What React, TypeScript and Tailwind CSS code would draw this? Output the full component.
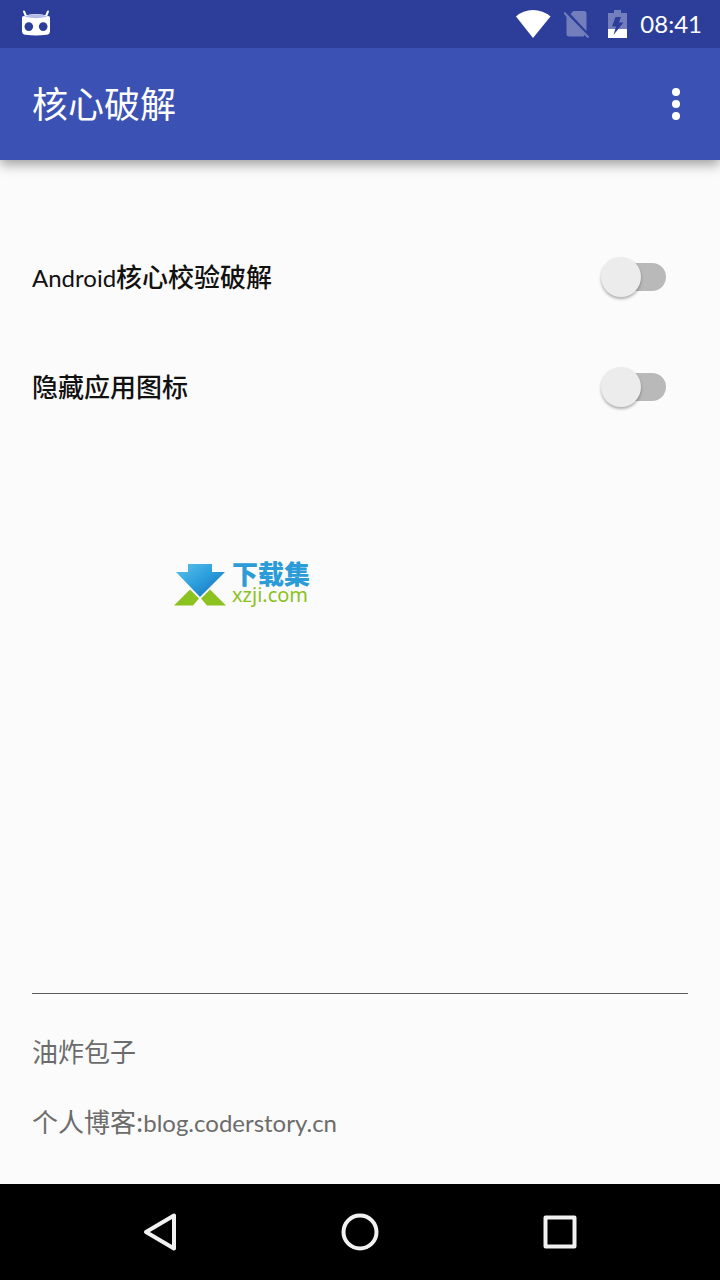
import React, { useState } from "react";

const SETTINGS = [
  { id: "core", latin: "Android", label: "核心校验破解" },
  { id: "icon", latin: "", label: "隐藏应用图标" },
];

function StatusBar() {
  return (
    <div className="z-20 flex h-12 items-center justify-between bg-[#2c3e9a] pl-5 pr-[18px]">
      <svg className="h-8 w-8" viewBox="0 0 32 32" fill="none">
        <path d="M4 3.5 6 8M28 3.5 26 8" stroke="#fff" strokeWidth="2" strokeLinecap="round" />
        <path
          d="M2 9.5Q2 8 4 8Q16 4 28 8Q30 8 30 9.5V23Q30 26.5 26.5 26.8Q16 28 5.5 26.8Q2 26.5 2 23Z"
          fill="#fff"
        />
        <path d="M4 8.5Q16 4 28 8.5Q16 12 4 8.5Z" fill="#b4bce6" />
        <circle cx="8.8" cy="18.6" r="4.3" fill="#2c3e9a" />
        <circle cx="23.2" cy="18.6" r="4.3" fill="#2c3e9a" />
      </svg>

      <div className="flex items-center gap-3">
        <svg className="h-7 w-9" viewBox="0 0 36 28">
          <path d="M17 28 0 6.5Q7 0 17 0T34.500 6.500Z" fill="#fff" />
        </svg>
        <svg className="h-7 w-8" viewBox="0 0 32 28">
          <path
            d="M9.5 1H20Q22.500 1 22.500 3.500V21L6.500 4ZM2.500 5.500 20.500 24.500 20 26.500H5.500Q2.500 26.500 2.500 24Z"
            fill="#737fbd"
          />
          <path d="M0 2.500 24.500 27.500" stroke="#737fbd" strokeWidth="2" />
        </svg>
        <svg className="h-7 w-5" viewBox="0 0 20 28">
          <path d="M6 0H13V3H19V19H0V3H6Z" fill="#737fbd" />
          <path d="M0 19H19V28H0Z" fill="#fff" />
          <path d="M7.500 7H13L11 12.500H15.500L5.500 25 8 16.500H4Z" fill="#2c3e9a" />
        </svg>
        <time className="font-[Lato] text-2xl text-white">08:41</time>
      </div>
    </div>
  );
}

function AppBar() {
  return (
    <header className="z-10 flex h-28 items-center justify-between bg-[#3b52b4] pl-8 pr-6 shadow-[0_4px_12px_rgba(0,0,0,0.4)]">
      <h1 className="pb-1 text-4xl text-white">核心破解</h1>
      <button type="button" aria-label="更多选项" className="flex h-12 w-10 items-center justify-center">
        <svg className="h-8 w-2" viewBox="0 0 8 32" fill="#fff">
          <circle cx="4" cy="4" r="4" />
          <circle cx="4" cy="16" r="4" />
          <circle cx="4" cy="28" r="4" />
        </svg>
      </button>
    </header>
  );
}

type SwitchRowProps = {
  id: string;
  latin: string;
  label: string;
  checked: boolean;
  onChange: () => void;
};

function SwitchRow({ id, latin, label, checked, onChange }: SwitchRowProps) {
  return (
    <div className="flex h-[110px] items-center justify-between pl-8 pr-[54px]">
      <label htmlFor={id} className="pb-1 text-[26px] font-medium text-[#111111]">
        {latin && <span className="font-[Lato] text-2xl font-normal">{latin}</span>}
        {label}
      </label>
      <input
        id={id}
        type="checkbox"
        role="switch"
        checked={checked}
        onChange={onChange}
        className="grid h-10 w-[65px] appearance-none items-center before:col-start-1 before:row-start-1 before:h-7 before:w-[60px] before:justify-self-end before:rounded-full before:bg-[#b9b9b9] after:col-start-1 after:row-start-1 after:h-10 after:w-10 after:rounded-full after:bg-[#ececec] after:shadow-[0_2px_3px_rgba(0,0,0,0.3)] checked:before:bg-[#9fa8da] checked:after:justify-self-end checked:after:bg-[#3b52b4]"
      />
    </div>
  );
}

function SiteLogo() {
  return (
    <div className="ml-[174px] mt-[120px] flex items-center gap-1.5">
      <svg className="h-11 w-[52px]" viewBox="0 0 52 44">
        <defs>
          <linearGradient id="arrow" x1="0" y1="0" x2="1" y2="1">
            <stop offset="0" stopColor="#5cc4ec" />
            <stop offset="0.5" stopColor="#2b9ddc" />
            <stop offset="1" stopColor="#1568b4" />
          </linearGradient>
        </defs>
        <path d="M14 2H38V10H51L26 35 2 10H14Z" fill="url(#arrow)" />
        <path d="M0 43.500 16 27.500 25 36.500 19 43.500ZM52 43.500 36 27.500 27 36.500 33 43.500Z" fill="#8cc220" />
      </svg>
      <div className="flex flex-col">
        <span className="text-[26px] font-black leading-[22px] text-[#2b9cd8]">下载集</span>
        <span className="font-[Noto_Sans] text-xl leading-[22px] text-[#8cc220]">xzji.com</span>
      </div>
    </div>
  );
}

function NavBar() {
  return (
    <nav className="flex h-24 bg-black px-15">
      <button type="button" aria-label="返回" className="flex flex-1 items-center justify-center">
        <svg className="h-10 w-10" viewBox="0 0 40 40" fill="none" stroke="#f2f2f2" strokeWidth="4" strokeLinejoin="round">
          <path d="M34 3.500V36.500L6 20Z" />
        </svg>
      </button>
      <button type="button" aria-label="主页" className="flex flex-1 items-center justify-center">
        <svg className="h-10 w-10" viewBox="0 0 40 40" fill="none" stroke="#f2f2f2" strokeWidth="4">
          <circle cx="20" cy="20" r="16.500" />
        </svg>
      </button>
      <button type="button" aria-label="最近任务" className="flex flex-1 items-center justify-center">
        <svg className="h-10 w-10" viewBox="0 0 40 40" fill="none" stroke="#f2f2f2" strokeWidth="4" strokeLinejoin="round">
          <path d="M5.500 5.500H34.500V34.500H5.500Z" />
        </svg>
      </button>
    </nav>
  );
}

export default function App() {
  const [enabled, setEnabled] = useState<Record<string, boolean>>({});

  const toggle = (id: string) => {
    setEnabled((prev) => ({ ...prev, [id]: !prev[id] }));
  };

  return (
    <div className="flex min-h-screen flex-col bg-[#fbfbfb] font-['Noto_Sans_CJK_SC',sans-serif]">
      <StatusBar />
      <AppBar />

      <main className="flex-1 pt-[62px]">
        {SETTINGS.map((item) => (
          <SwitchRow
            key={item.id}
            {...item}
            checked={!!enabled[item.id]}
            onChange={() => toggle(item.id)}
          />
        ))}
        <SiteLogo />
      </main>

      <footer className="mx-8 border-t border-[#5c5c5c] pb-7 pt-[22px] text-[26px] text-[#6c6c6c]">
        <p className="leading-[70px]">油炸包子</p>
        <p className="leading-[70px]">
          个人博客:
          <a href="http://blog.coderstory.cn" className="font-[Lato] text-2xl">
            blog.coderstory.cn
          </a>
        </p>
      </footer>

      <NavBar />
    </div>
  );
}
